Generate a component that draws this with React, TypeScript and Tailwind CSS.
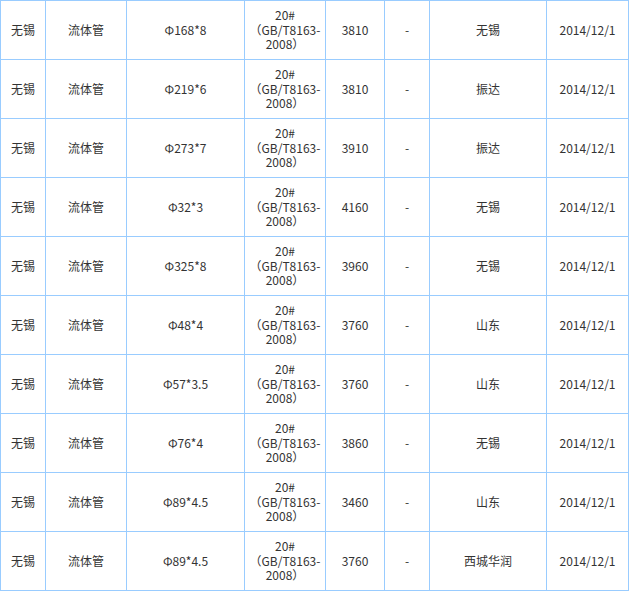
import React from 'react';

type Row = {
  city: string;
  name: string;
  size: string;
  price: string;
  mill: string;
};

const ROWS: Row[] = [
  { city: '无锡', name: '流体管', size: 'Φ168*8', price: '3810', mill: '无锡' },
  { city: '无锡', name: '流体管', size: 'Φ219*6', price: '3810', mill: '振达' },
  { city: '无锡', name: '流体管', size: 'Φ273*7', price: '3910', mill: '振达' },
  { city: '无锡', name: '流体管', size: 'Φ32*3', price: '4160', mill: '无锡' },
  { city: '无锡', name: '流体管', size: 'Φ325*8', price: '3960', mill: '无锡' },
  { city: '无锡', name: '流体管', size: 'Φ48*4', price: '3760', mill: '山东' },
  { city: '无锡', name: '流体管', size: 'Φ57*3.5', price: '3760', mill: '山东' },
  { city: '无锡', name: '流体管', size: 'Φ76*4', price: '3860', mill: '无锡' },
  { city: '无锡', name: '流体管', size: 'Φ89*4.5', price: '3460', mill: '山东' },
  { city: '无锡', name: '流体管', size: 'Φ89*4.5', price: '3760', mill: '西城华润' },
];

const Cell = ({ children }: { children: React.ReactNode }) => (
  <div className="flex h-[59px] items-center justify-center border-l border-t border-[#99ccff] text-center">
    {children}
  </div>
);

// grade text: 20#（GB/T8163-2008）, wrapped over three lines like the source
const Grade = () => (
  <div className="leading-[14.5px]">
    <div>20#</div>
    <div className="whitespace-nowrap">
      <span className="inline-block w-[12px] text-right align-top">（</span>GB/T8163-
    </div>
    <div className="whitespace-nowrap">
      2008<span className="inline-block w-[12px] text-left align-top">）</span>
    </div>
  </div>
);

export default function App() {
  return (
    <div className="bg-white">
      <div
        className="grid w-[629px] grid-cols-[45px_81px_118px_81px_59px_45px_117px_82px] border-r border-b border-[#99ccff] text-[12px] text-[#333333]"
        style={{ fontFamily: '"Noto Sans CJK SC", "DejaVu Sans", sans-serif' }}
      >
        {ROWS.map((r, i) => (
          <React.Fragment key={i}>
            <Cell>{r.city}</Cell>
            <Cell>{r.name}</Cell>
            <Cell>{r.size}</Cell>
            <Cell>
              <Grade />
            </Cell>
            <Cell>{r.price}</Cell>
            <Cell>-</Cell>
            <Cell>{r.mill}</Cell>
            <Cell>2014/12/1</Cell>
          </React.Fragment>
        ))}
      </div>
    </div>
  );
}
